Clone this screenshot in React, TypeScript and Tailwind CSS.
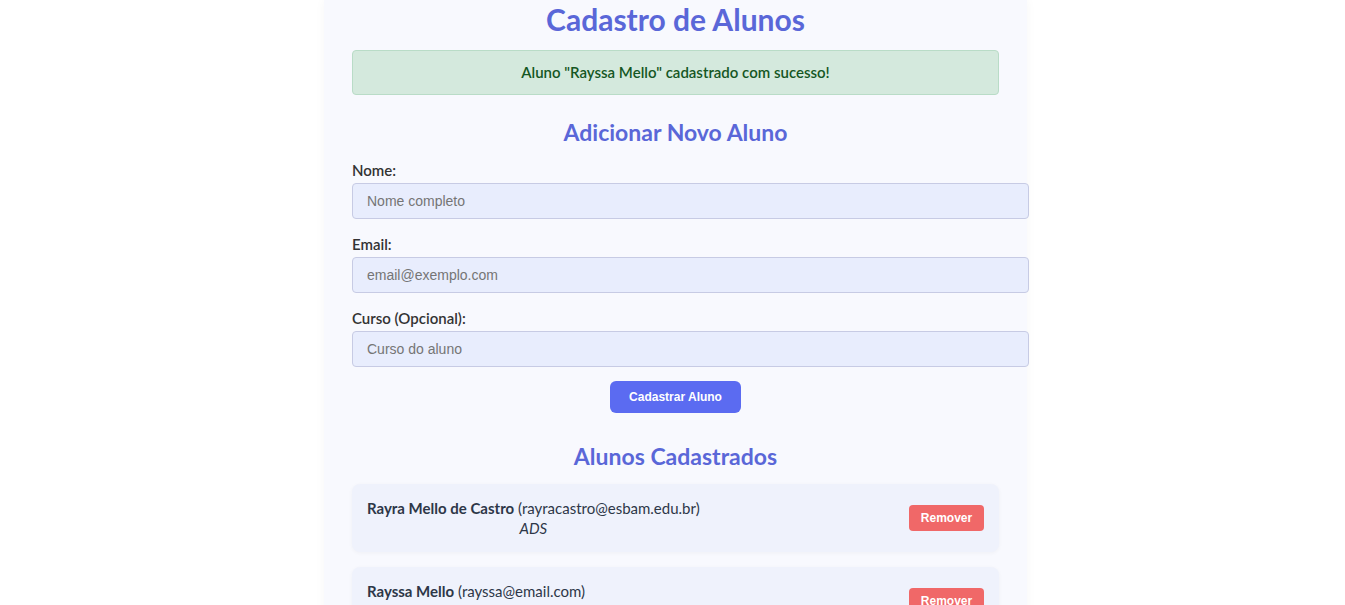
import React from 'react';

const alunos = [
  { id: 1, nome: 'Rayra Mello de Castro', email: 'rayracastro@esbam.edu.br', curso: 'ADS' },
  { id: 2, nome: 'Rayssa Mello', email: 'rayssa@email.com', curso: '' },
];

const font = { fontFamily: 'Lato, "Noto Sans", sans-serif' };
const arial = { fontFamily: '"Liberation Sans", Arial, sans-serif' };

export default function App() {
  return (
    <div className="min-h-screen bg-white flex justify-center pl-[6px]" style={font}>
      <div className="w-[703px] bg-[#f8f9fe] px-[28px] shadow-[0_0_10px_rgba(0,0,0,0.04)]">
        <h1 className="text-center text-[30px] leading-[38px] font-bold text-[#5a67d8]">Cadastro de Alunos</h1>

        <div className="mt-[12px] h-[45px] flex items-center justify-center rounded-[4px] border border-[#b9dcc7] bg-[#d4e9dd] text-[15px] font-semibold text-[#155724]">
          Aluno "Rayssa Mello" cadastrado com sucesso!
        </div>

        <h2 className="mt-[22px] text-center text-[23px] leading-[30px] font-bold text-[#5a67d8]">Adicionar Novo Aluno</h2>

        <form className="mt-[13px] flex flex-col" onSubmit={(e) => e.preventDefault()}>
          {[
            { label: 'Nome:', ph: 'Nome completo' },
            { label: 'Email:', ph: 'email@exemplo.com' },
            { label: 'Curso (Opcional):', ph: 'Curso do aluno' },
          ].map((f, i) => (
            <div key={f.label} className={i > 0 ? 'mt-[15px]' : ''}>
              <label className="block text-[15px] leading-[20px] font-semibold text-[#333]">{f.label}</label>
              <input
                placeholder={f.ph}
                className="mt-[3px] box-content w-full h-[34px] px-[14px] rounded-[4px] border border-[#c7cbe4] bg-[#e8edfd] text-[14px] text-[#333] placeholder:text-[#757575] outline-none"
                style={arial}
              />
            </div>
          ))}
          <button
            type="submit"
            className="mt-[14px] self-center w-[131px] h-[32px] rounded-[6px] bg-[#5b6bf1] text-white text-[12px] font-bold"
            style={arial}
          >
            Cadastrar Aluno
          </button>
        </form>

        <h2 className="mt-[28px] text-center text-[23px] leading-[30px] font-bold text-[#5a67d8]">Alunos Cadastrados</h2>

        <ul className="mt-[13px] flex flex-col gap-[15px] pb-[20px]">
          {alunos.map((a) => (
            <li
              key={a.id}
              className="flex items-center justify-between min-h-[68px] pl-[15px] pr-[15px] rounded-[8px] bg-[#eff2fc] shadow-[0_1px_4px_rgba(0,0,0,0.04)]"
            >
              <div className="text-center text-[15px] leading-[20px] text-[#2d3748]">
                <div>
                  <span className="font-bold">{a.nome}</span> ({a.email})
                </div>
                <div className="italic">{a.curso || '\u00a0'}</div>
              </div>
              <button
                className="w-[75px] h-[26px] rounded-[4px] bg-[#f06868] text-white text-[12px] font-bold"
                style={arial}
              >
                Remover
              </button>
            </li>
          ))}
        </ul>
      </div>
    </div>
  );
}
